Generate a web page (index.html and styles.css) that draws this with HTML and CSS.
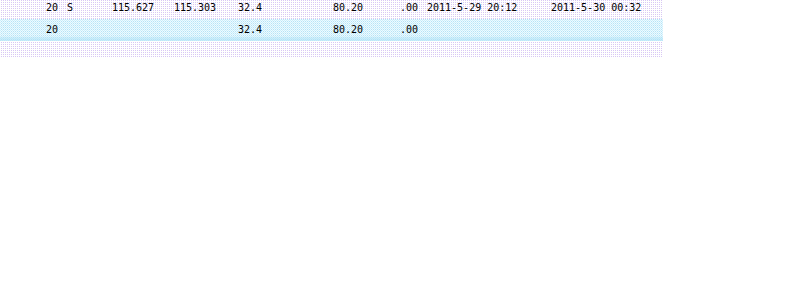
FILE: index.html
```html
<!DOCTYPE html>
<html>
<head>
<meta charset="utf-8">
<link rel="stylesheet" href="styles.css">
</head>
<body>
<div class="grid">
  <div class="row row-a">
    <span class="c c1">20</span>
    <span class="c c2">S</span>
    <span class="c c3">115.627</span>
    <span class="c c4">115.303</span>
    <span class="c c5">32.4</span>
    <span class="c c6">80.20</span>
    <span class="c c7">.00</span>
    <span class="c c8">2011-5-29 20:12</span>
    <span class="c c9">2011-5-30 00:32</span>
  </div>
  <div class="row row-b">
    <span class="c c1">20</span>
    <span class="c c2"></span>
    <span class="c c3"></span>
    <span class="c c4"></span>
    <span class="c c5">32.4</span>
    <span class="c c6">80.20</span>
    <span class="c c7">.00</span>
    <span class="c c8"></span>
    <span class="c c9"></span>
  </div>
</div>
</body>
</html>
```

FILE: styles.css
```css
html, body {
  margin: 0;
  padding: 0;
  background: #ffffff;
}
.grid {
  width: 663px;
  height: 58px;
  background-color: #ffffff;
  background-image: conic-gradient(#d8c8f4 0 25%, transparent 0 100%);
  background-size: 2px 2px;
  font-family: "DejaVu Sans Mono", "Liberation Mono", monospace;
  font-size: 10px;
  color: #000000;
}
.row {
  display: flex;
  align-items: flex-start;
}
.row-a {
  height: 19px;
  padding-top: 2px;
  box-sizing: border-box;
}
.row-b {
  height: 22px;
  box-sizing: border-box;
  padding-top: 5px;
  background-color: #effafe;
  background-image:
    linear-gradient(to bottom, transparent 0, transparent 17px, rgba(176, 226, 246, 0.5) 19px, rgba(176, 226, 246, 0.65) 22px),
    conic-gradient(#b4e4f8 0 25%, transparent 0 50%, #cdeffb 0 75%, transparent 0 100%);
  background-size: 100% 100%, 2px 2px;
}
.c {
  display: block;
  white-space: pre;
  line-height: 12px;
}
.c1 { margin-left: 46px; width: 21px; }
.c2 { width: 45px; }
.c3 { width: 62px; }
.c4 { width: 64px; }
.c5 { width: 95px; }
.c6 { width: 67px; }
.c7 { width: 27px; }
.c8 { width: 124px; }
.c9 { width: 100px; }
```
